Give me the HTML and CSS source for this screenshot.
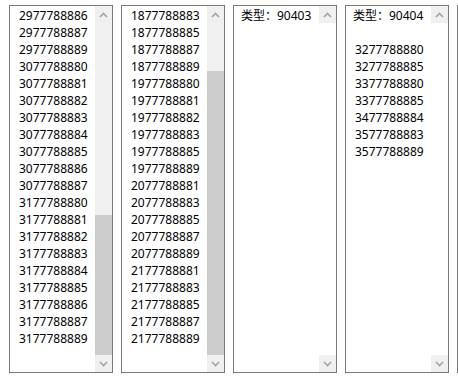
FILE: index.html
```html
<!DOCTYPE html>
<html lang="zh-CN">
<head>
  <meta charset="UTF-8">
  <title>列表</title>
  <link rel="stylesheet" href="styles.css">
</head>
<body>
  <div class="lists">
    <div class="listbox">
      <div class="items">
        <div class="opt">2977788886</div>
        <div class="opt">2977788887</div>
        <div class="opt">2977788889</div>
        <div class="opt">3077788880</div>
        <div class="opt">3077788881</div>
        <div class="opt">3077788882</div>
        <div class="opt">3077788883</div>
        <div class="opt">3077788884</div>
        <div class="opt">3077788885</div>
        <div class="opt">3077788886</div>
        <div class="opt">3077788887</div>
        <div class="opt">3177788880</div>
        <div class="opt">3177788881</div>
        <div class="opt">3177788882</div>
        <div class="opt">3177788883</div>
        <div class="opt">3177788884</div>
        <div class="opt">3177788885</div>
        <div class="opt">3177788886</div>
        <div class="opt">3177788887</div>
        <div class="opt">3177788889</div>
      </div>
      <div class="scrollbar">
        <div class="btn"><svg width="9" height="6" viewBox="0 0 9 6"><polyline points="1,5 4.5,1.5 8,5" fill="none" stroke="#a3a3a3" stroke-width="1.6"/></svg></div>
        <div class="track" style="height: 192px"></div>
        <div class="thumb"></div>
        <div class="btn"><svg width="9" height="6" viewBox="0 0 9 6"><polyline points="1,1 4.5,4.5 8,1" fill="none" stroke="#a3a3a3" stroke-width="1.6"/></svg></div>
      </div>
    </div>

    <div class="listbox">
      <div class="items">
        <div class="opt">1877788883</div>
        <div class="opt">1877788885</div>
        <div class="opt">1877788887</div>
        <div class="opt">1877788889</div>
        <div class="opt">1977788880</div>
        <div class="opt">1977788881</div>
        <div class="opt">1977788882</div>
        <div class="opt">1977788883</div>
        <div class="opt">1977788885</div>
        <div class="opt">1977788889</div>
        <div class="opt">2077788881</div>
        <div class="opt">2077788883</div>
        <div class="opt">2077788885</div>
        <div class="opt">2077788887</div>
        <div class="opt">2077788889</div>
        <div class="opt">2177788881</div>
        <div class="opt">2177788883</div>
        <div class="opt">2177788885</div>
        <div class="opt">2177788887</div>
        <div class="opt">2177788889</div>
      </div>
      <div class="scrollbar">
        <div class="btn"><svg width="9" height="6" viewBox="0 0 9 6"><polyline points="1,5 4.5,1.5 8,5" fill="none" stroke="#a3a3a3" stroke-width="1.6"/></svg></div>
        <div class="track" style="height: 48px"></div>
        <div class="thumb"></div>
        <div class="btn"><svg width="9" height="6" viewBox="0 0 9 6"><polyline points="1,1 4.5,4.5 8,1" fill="none" stroke="#a3a3a3" stroke-width="1.6"/></svg></div>
      </div>
    </div>

    <div class="listbox">
      <div class="items">
        <div class="group">类型：90403</div>
      </div>
      <div class="scrollbar off">
        <div class="btn"><svg width="9" height="6" viewBox="0 0 9 6"><polyline points="1,5 4.5,1.5 8,5" fill="none" stroke="#a3a3a3" stroke-width="1.6"/></svg></div>
        <div class="spacer"></div>
        <div class="btn"><svg width="9" height="6" viewBox="0 0 9 6"><polyline points="1,1 4.5,4.5 8,1" fill="none" stroke="#a3a3a3" stroke-width="1.6"/></svg></div>
      </div>
    </div>

    <div class="listbox">
      <div class="items">
        <div class="group">类型：90404</div>
        <div class="opt"></div>
        <div class="opt">3277788880</div>
        <div class="opt">3277788885</div>
        <div class="opt">3377788880</div>
        <div class="opt">3377788885</div>
        <div class="opt">3477788884</div>
        <div class="opt">3577788883</div>
        <div class="opt">3577788889</div>
      </div>
      <div class="scrollbar off">
        <div class="btn"><svg width="9" height="6" viewBox="0 0 9 6"><polyline points="1,5 4.5,1.5 8,5" fill="none" stroke="#a3a3a3" stroke-width="1.6"/></svg></div>
        <div class="spacer"></div>
        <div class="btn"><svg width="9" height="6" viewBox="0 0 9 6"><polyline points="1,1 4.5,4.5 8,1" fill="none" stroke="#a3a3a3" stroke-width="1.6"/></svg></div>
      </div>
    </div>

    <!-- next list is cut off by the window edge -->
    <div class="listbox edge"></div>
  </div>
</body>
</html>
```

FILE: styles.css
```css
body {
  margin: 0;
  background: #fff;
  overflow: hidden;
  font-family: "Noto Sans", "Noto Sans CJK SC", sans-serif;
  font-size: 12px;
  color: #000;
}

.lists {
  display: flex;
  gap: 8px;
  width: 458px;
  box-sizing: border-box;
  padding: 5px 0 0 9px;
  overflow: hidden;
}

.listbox {
  flex: none;
  display: flex;
  width: 104px;
  height: 368px;
  box-sizing: border-box;
  border: 1px solid #7a7a7a;
  background: #fff;
}

.listbox.edge {
  flex: 1;
  width: auto;
  min-width: 0;
  border-right: none;
}

.items {
  flex: 1;
  padding: 1px 0 0 7px;
  overflow: hidden;
}

.group,
.opt {
  height: 17px;
  line-height: 17px;
  white-space: nowrap;
}

.opt {
  padding-left: 2px;
}

.scrollbar {
  flex: none;
  width: 17px;
  display: flex;
  flex-direction: column;
  background: #f0f0f0;
}

.scrollbar.off {
  background: #fff;
}

.btn {
  height: 17px;
  display: flex;
  align-items: center;
  justify-content: center;
  background: #f0f0f0;
}

.track {
  background: #f0f0f0;
}

.thumb {
  flex: 1;
  background: #cdcdcd;
}

.spacer {
  flex: 1;
}
```
